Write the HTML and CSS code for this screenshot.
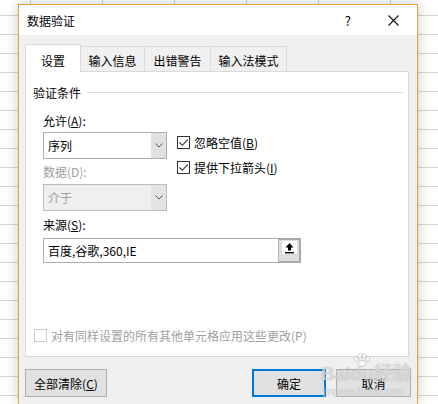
FILE: index.html
```html
<!DOCTYPE html>
<html lang="zh-CN">
<head>
<meta charset="utf-8">
<title>数据验证</title>
<link rel="stylesheet" href="styles.css">
</head>
<body>
<div class="dialog">
  <div class="titlebar">
    <span class="title">数据验证</span>
    <span class="help">?</span>
    <svg class="close" width="11" height="11" viewBox="0 0 11 11"><path d="M0.5 0.5L10.5 10.5M10.5 0.5L0.5 10.5" stroke="#111" stroke-width="1.1" fill="none"/></svg>
  </div>
  <div class="content">
    <div class="tabs">
      <div class="tab active t1">设置</div>
      <div class="tab t2">输入信息</div>
      <div class="tab t3">出错警告</div>
      <div class="tab t4">输入法模式</div>
    </div>
    <div class="panel">
      <div class="group-head"><span>验证条件</span><span class="rule"></span></div>
      <div class="criteria">
        <div class="left">
          <div class="label">允许(<u>A</u>):</div>
          <div class="select">
            <span class="val">序列</span>
            <span class="dd"><svg width="8" height="5" viewBox="0 0 8 5"><path d="M0.5 0.5L4 4L7.5 0.5" stroke="#555" fill="none"/></svg></span>
          </div>
          <div class="label off">数据(D):</div>
          <div class="select off">
            <span class="val">介于</span>
            <span class="dd"><svg width="8" height="5" viewBox="0 0 8 5"><path d="M0.5 0.5L4 4L7.5 0.5" stroke="#555" fill="none"/></svg></span>
          </div>
        </div>
        <div class="right">
          <div class="check"><span class="box"><svg width="11" height="11" viewBox="0 0 11 11"><path d="M1.5 5.5L4.3 8.3L9.7 2.7" stroke="#333" stroke-width="1.1" fill="none"/></svg></span><span>忽略空值(<u>B</u>)</span></div>
          <div class="check"><span class="box"><svg width="11" height="11" viewBox="0 0 11 11"><path d="M1.5 5.5L4.3 8.3L9.7 2.7" stroke="#333" stroke-width="1.1" fill="none"/></svg></span><span>提供下拉箭头(<u>I</u>)</span></div>
        </div>
      </div>
      <div class="source">
        <div class="label">来源(<u>S</u>):</div>
        <div class="input">
          <span class="val">百度,谷歌,360,IE</span>
          <span class="pick"><span class="pick-face"><svg width="13" height="12" viewBox="0 0 13 12"><path d="M6.5 1L2.5 5.5H5V8.5H8V5.5H10.5Z" fill="#000"/><rect x="2" y="10" width="9" height="1.4" fill="#000"/></svg></span></span>
        </div>
      </div>
      <div class="check apply off"><span class="box"></span><span>对有同样设置的所有其他单元格应用这些更改(P)</span></div>
    </div>
    <div class="buttons">
      <button class="btn clear">全部清除(<u>C</u>)</button>
      <button class="btn ok">确定</button>
      <button class="btn cancel">取消</button>
    </div>
  </div>
  <div class="watermark">
    <svg class="paw" width="20" height="14" viewBox="0 0 20 14"><g fill="rgba(255,255,255,0.6)" stroke="rgba(140,140,140,0.45)" stroke-width="0.8"><ellipse cx="4" cy="6" rx="2" ry="2.5"/><ellipse cx="8" cy="3" rx="2" ry="2.5"/><ellipse cx="12" cy="3" rx="2" ry="2.5"/><ellipse cx="16" cy="6" rx="2" ry="2.5"/><ellipse cx="10" cy="10.5" rx="4" ry="3"/></g></svg>
    <span class="wm-main">Baidu经验</span>
    <span class="wm-sub">jingyan.baidu.com</span>
  </div>
</div>
</body>
</html>
```
FILE: styles.css
```css
html, body {
  margin: 0;
  padding: 0;
}
body {
  width: 438px;
  height: 404px;
  overflow: hidden;
  background-color: #fff;
  background-image:
    repeating-linear-gradient(to bottom, transparent 0, transparent 15px, #d4d4d4 15px, #d4d4d4 16px, transparent 16px, transparent 19px),
    repeating-linear-gradient(to right, transparent 0, transparent 30px, #d4d4d4 30px, #d4d4d4 31px, transparent 31px, transparent 72px);
  font-family: "Noto Sans CJK SC", "Noto Sans", sans-serif;
  font-size: 12px;
  line-height: 17px;
  color: #000;
}
.dialog {
  position: relative;
  box-sizing: border-box;
  margin: 4px 0 0 18px;
  width: 400px;
  height: 400px;
  border: 1px solid #e6a040;
  border-bottom: none;
  background: #f0f0f0;
  box-shadow: 0 0 12px rgba(0, 0, 0, 0.22);
}
.titlebar {
  display: flex;
  align-items: center;
  height: 30px;
  background: #fff;
  padding: 0 18px 0 8px;
}
.title {
  flex: 1;
}
.help {
  font-size: 13px;
  margin-right: 37px;
}
.content {
  padding: 9px 0 0 6px;
}
.tabs {
  display: flex;
  align-items: flex-end;
  height: 27px;
}
.tab {
  box-sizing: border-box;
  height: 25px;
  padding-top: 5px;
  text-align: center;
  border: 1px solid #d9d9d9;
  border-bottom: none;
  background: #f0f0f0;
  margin-left: -1px;
}
.tab.active {
  position: relative;
  z-index: 1;
  height: 28px;
  padding-top: 7px;
  margin-bottom: -1px;
  margin-left: 0;
  background: #fff;
}
.t1 { width: 56px; }
.t2 { width: 65px; }
.t3 { width: 67px; }
.t4 { width: 77px; }
.panel {
  box-sizing: border-box;
  width: 384px;
  height: 286px;
  border: 1px solid #d9d9d9;
  background: #fff;
}
.group-head {
  display: flex;
  align-items: center;
  margin-top: 12px;
  padding: 0 5px 0 7px;
}
.rule {
  flex: 1;
  height: 1px;
  background: #dcdcdc;
  margin-left: 6px;
}
.criteria {
  display: flex;
  margin-top: 11px;
  padding-left: 17px;
}
.left {
  width: 124px;
}
.label {
  height: 17px;
}
.label.off {
  margin-top: 4px;
  color: #a0a0a0;
}
.select {
  box-sizing: border-box;
  display: flex;
  height: 27px;
  margin-top: 3px;
  border: 1px solid #adadad;
  background: #fff;
}
.select.off {
  margin-top: 4px;
  border-color: #bcbcbc;
  background: #efefef;
  color: #a0a0a0;
}
.val {
  flex: 1;
  padding-left: 4px;
  align-self: center;
}
.dd {
  width: 15px;
  display: flex;
  align-items: center;
  justify-content: center;
  background: #e1e1e1;
}
.select.off .dd {
  background: #e3e3e3;
}
.right {
  margin-left: 10px;
  padding-top: 22px;
  display: flex;
  flex-direction: column;
  gap: 8px;
}
.check {
  display: flex;
  align-items: center;
  height: 17px;
}
.box {
  box-sizing: border-box;
  width: 13px;
  height: 13px;
  border: 1px solid #333;
  background: #fff;
  margin-right: 4px;
  display: flex;
  align-items: center;
  justify-content: center;
}
.source {
  margin-top: 5px;
  padding-left: 17px;
}
.input {
  box-sizing: border-box;
  display: flex;
  width: 258px;
  height: 25px;
  margin-top: 5px;
  border: 1px solid #adadad;
  background: #fff;
}
.pick {
  box-sizing: border-box;
  width: 23px;
  margin: -1px -1px -1px 0;
  border: 2px solid #a9a9a9;
  border-left: 1px solid #b5b5b5;
  background: #dddddd;
  display: flex;
  align-items: flex-start;
  justify-content: center;
  padding-top: 1px;
}
.pick-face {
  width: 15px;
  height: 13px;
  background: #fff;
  display: flex;
  align-items: center;
  justify-content: center;
}
.apply {
  margin-top: 64px;
  padding-left: 8px;
}
.apply.off {
  color: #a0a0a0;
}
.apply .box {
  border-color: #cccccc;
}
.buttons {
  display: flex;
  margin-top: 12px;
  width: 386px;
}
.btn {
  box-sizing: border-box;
  height: 28px;
  font: inherit;
  color: #000;
  background: #e1e1e1;
  border: 1px solid #adadad;
  padding: 0;
}
.clear {
  width: 82px;
}
.ok {
  width: 74px;
  margin-left: auto;
  border: 2px solid #0078d7;
}
.cancel {
  width: 75px;
  margin-left: 10px;
}
.watermark {
  position: absolute;
  left: 300px;
  top: 348px;
  width: 100px;
  height: 50px;
  pointer-events: none;
  color: rgba(255, 255, 255, 0.55);
  text-shadow: 0 0 1px rgba(120, 120, 120, 0.6);
}
.paw {
  position: absolute;
  left: 33px;
  top: 0;
}
.wm-main {
  position: absolute;
  left: 2px;
  top: 10px;
  font-family: "Liberation Sans", "Noto Sans CJK SC", sans-serif;
  font-size: 19px;
  font-weight: bold;
  line-height: 22px;
  white-space: nowrap;
}
.wm-sub {
  position: absolute;
  left: 4px;
  top: 33px;
  font-family: "Liberation Sans", sans-serif;
  font-size: 10px;
  line-height: 12px;
  white-space: nowrap;
}
```
